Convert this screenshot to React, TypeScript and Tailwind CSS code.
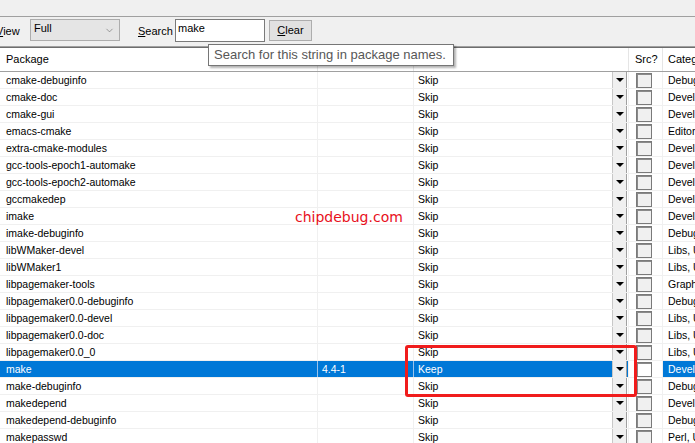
import { ChevronDown } from "lucide-react";

type Row = { name: string; version?: string; action: string; category: string; selected?: boolean };

const rows: Row[] = [
  { name: "cmake-debuginfo", action: "Skip", category: "Debug" },
  { name: "cmake-doc", action: "Skip", category: "Devel" },
  { name: "cmake-gui", action: "Skip", category: "Devel" },
  { name: "emacs-cmake", action: "Skip", category: "Editors" },
  { name: "extra-cmake-modules", action: "Skip", category: "Devel" },
  { name: "gcc-tools-epoch1-automake", action: "Skip", category: "Devel" },
  { name: "gcc-tools-epoch2-automake", action: "Skip", category: "Devel" },
  { name: "gccmakedep", action: "Skip", category: "Devel" },
  { name: "imake", action: "Skip", category: "Devel" },
  { name: "imake-debuginfo", action: "Skip", category: "Debug" },
  { name: "libWMaker-devel", action: "Skip", category: "Libs, Utils" },
  { name: "libWMaker1", action: "Skip", category: "Libs, Utils" },
  { name: "libpagemaker-tools", action: "Skip", category: "Graphics" },
  { name: "libpagemaker0.0-debuginfo", action: "Skip", category: "Debug" },
  { name: "libpagemaker0.0-devel", action: "Skip", category: "Libs, Utils" },
  { name: "libpagemaker0.0-doc", action: "Skip", category: "Libs, Utils" },
  { name: "libpagemaker0.0_0", action: "Skip", category: "Libs, Utils" },
  { name: "make", version: "4.4-1", action: "Keep", category: "Devel", selected: true },
  { name: "make-debuginfo", action: "Skip", category: "Debug" },
  { name: "makedepend", action: "Skip", category: "Devel" },
  { name: "makedepend-debuginfo", action: "Skip", category: "Debug" },
  { name: "makepasswd", action: "Skip", category: "Perl, Utils" },
]

function DropButton() {
  return (
    <div className="ml-auto mr-[1px] w-[15px] h-[16px] bg-[#f0f0f0] border-l border-[#c8c8c8] border-r border-r-[#a0a0a0] flex items-center justify-center">
      <svg width="8" height="4" viewBox="0 0 8 4">
        <polygon points="0,0 8,0 4,4" fill="#000" />
      </svg>
    </div>
  )
}

function PackageRow({ row }: { row: Row }) {
  const sel = row.selected
  return (
    <div className={`flex h-[17px] border-b border-[#f0f0f0] text-[10.5px] leading-[16px] ${sel ? "text-white" : "text-black"}`}>
      <div className={`w-[318px] pl-[6px] border-r ${sel ? "bg-[#0078d7] border-[#9cc3ea]" : "border-[#f0f0f0]"}`}>{row.name}</div>
      <div className={`w-[96px] pl-[4px] border-r ${sel ? "bg-[#0078d7] border-[#9cc3ea]" : "border-[#f0f0f0]"}`}>{row.version ?? ""}</div>
      <div className={`w-[215px] flex pl-[4px] border-r border-[#f0f0f0] ${sel ? "bg-[#0078d7]" : ""}`}>
        <span>{row.action}</span>
        <DropButton />
      </div>
      <div className="w-[34px] border-r border-[#f0f0f0] bg-white flex items-start pt-[1px]">
        <div className={`ml-[7px] w-[16px] h-[15px] border border-[#7a7a7a] shadow-[inset_1px_1px_0_#8a8a8a] ${sel ? "bg-white" : "bg-[#f0f0f0]"}`} />
      </div>
      <div className={`flex-1 pl-[5px] overflow-hidden whitespace-nowrap ${sel ? "bg-[#0078d7]" : ""}`}>{row.category}</div>
    </div>
  )
}

export default function App() {
  return (
    <div className="relative w-[695px] h-[443px] overflow-hidden bg-white font-['Liberation_Sans',Arial,sans-serif] text-black">
      <div className="h-[17px] bg-[#f0f0f0] border-b border-[#a0a0a0]" />

      <div className="flex items-start h-[29px] pt-[2px] bg-[#f0f0f0] text-[11px]">
        <span className="-ml-[4px] w-[24px] h-[22px] leading-[22px] mt-[1px]">
          <span className="underline">V</span>iew
        </span>
        <div className="ml-[10px] w-[90px] h-[22px] bg-[#e5e5e5] border border-[#adadad] flex items-center pl-[3px] pr-[4px]">
          <span className="flex-1 -mt-[3px]">Full</span>
          <ChevronDown size={11} strokeWidth={1.2} color="#5a5a5a" />
        </div>
        <span className="ml-[18px] w-[34px] h-[22px] leading-[22px] mt-[1px]">
          <span className="underline">S</span>earch
        </span>
        <div className="ml-[3px] w-[90px] h-[23px] bg-white border border-[#7a7a7a] pl-[2px] leading-[17px]">make</div>
        <div className="ml-[4px] mt-[1px] w-[43px] h-[21px] bg-[#e1e1e1] border border-[#adadad] flex items-center justify-center">
          <span><span className="underline">C</span>lear</span>
        </div>
      </div>

      <div className="h-[2px] border-t border-[#a0a0a0] border-b border-b-[#6d6d6d]" />

      <div className="flex h-[24px] border-b border-[#a0a0a0] text-[11px] leading-[23px]">
        <div className="w-[318px] pl-[6px] border-r border-[#e5e5e5]">Package</div>
        <div className="w-[96px] border-r border-[#e5e5e5]" />
        <div className="w-[215px] border-r border-[#e5e5e5]" />
        <div className="w-[34px] pl-[6px] border-r border-[#e5e5e5]">Src?</div>
        <div className="flex-1 pl-[5px] whitespace-nowrap overflow-hidden">Category</div>
      </div>

      <div>
        {rows.map((r) => (
          <PackageRow key={r.name} row={r} />
        ))}
      </div>

      <div className="absolute left-[208px] top-[44px] w-[246px] h-[22px] bg-white border border-[#767676] shadow-[2px_2px_2px_rgba(0,0,0,0.3)] pl-[5px] text-[13px] leading-[20px] text-[#575757] whitespace-nowrap">
        Search for this string in package names.
      </div>

      <div className="absolute left-[405px] top-[345px] w-[232px] h-[52px] border-[3px] border-[#f01c1c] rounded-[3px]" />

      <div className="absolute left-[295px] top-[207px] text-[14px] text-[#e8101c] font-['DejaVu_Sans',sans-serif]">
        chipdebug.com
      </div>
    </div>
  )
}
